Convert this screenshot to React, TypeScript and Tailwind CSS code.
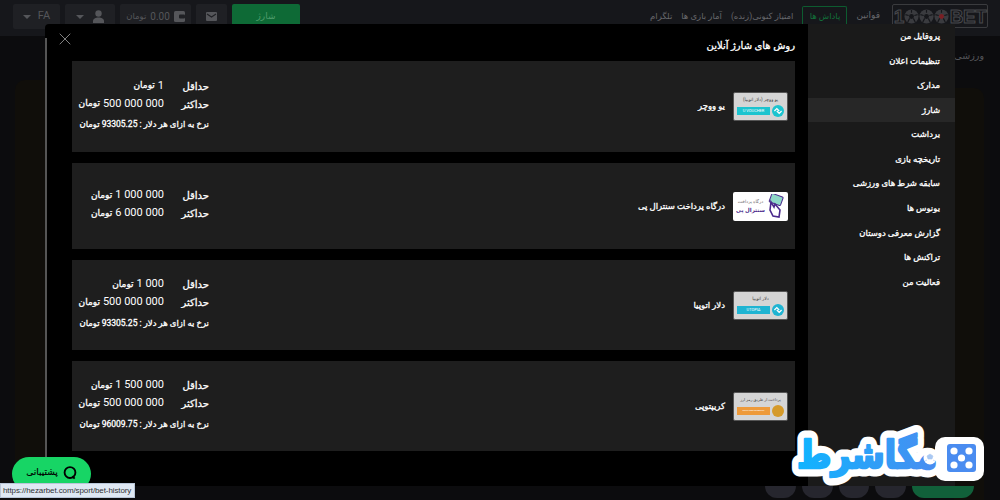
import React from 'react';
import { X } from 'lucide-react';

const FONT = "font-['Roboto','DejaVu_Sans',sans-serif]";
const HEAVY = '[-webkit-text-stroke:0.3px_white]';

const NAV_ITEMS = ['تلگرام', 'آمار بازی ها', 'امتیاز کنونی(زنده)'];
const MENU_ITEMS = [
  'پروفایل من',
  'تنظیمات اعلان',
  'مدارک',
  'شارژ',
  'برداشت',
  'تاریخچه بازی',
  'سابقه شرط های ورزشی',
  'بونوس ها',
  'گزارش معرفی دوستان',
  'تراکنش ها',
  'فعالیت من',
];

type Method = {
  name: string;
  min: string;
  max: string;
  rate?: string;
  height: string;
  thumb: React.ReactNode;
};

function Caret() {
  return <span className="h-0 w-0 border-x-[4px] border-t-[4px] border-x-transparent border-t-[#55565a]" />;
}

function SwirlBadge({ color, size }: { color: string; size: number }) {
  return (
    <svg width={size} height={size} viewBox="0 0 20 20" className="shrink-0">
      <circle cx="10" cy="10" r="10" fill={color} />
      <path d="M4 10l4-4 4 4M16 10l-4 4-4-4" fill="none" stroke="#fff" strokeWidth="2" />
    </svg>
  );
}

function GrayThumb({ title, label, bar, badge }: { title: string; label: string; bar: string; badge: string }) {
  return (
    <div className="flex h-[29px] w-[55px] shrink-0 flex-col justify-between rounded-[2px] border border-[#555] bg-[#d5d5d5] px-[3px] py-[3px]">
      <div className="whitespace-nowrap text-center text-[4.5px] leading-[8px] text-[#444]">{title}</div>
      <div dir="ltr" className="flex items-center justify-between gap-[2px]">
        <div className={`flex h-[8px] flex-1 items-center justify-center text-[4px] text-white ${bar}`}>{label}</div>
        <SwirlBadge color={badge} size={12} />
      </div>
    </div>
  );
}

function CentralThumb() {
  return (
    <div className="flex h-[29px] w-[55px] shrink-0 items-center justify-between rounded-[2px] bg-white px-[3px]">
      <svg width="20" height="24" viewBox="0 0 20 24" className="shrink-0">
        <rect x="5" y="1" width="12" height="9" rx="1" transform="rotate(20 11 6)" fill="#8fd8c8" stroke="#4b2a8c" />
        <path d="M6 8l3 5 1-3 5 6-1 7-6-1-3-6z" fill="#fff" stroke="#4b2a8c" strokeWidth="1.6" />
      </svg>
      <div className="flex-1 text-center leading-[9px]">
        <div className="whitespace-nowrap text-[4.5px] text-[#666]">درگاه پرداخت</div>
        <div className="whitespace-nowrap text-[5.5px] font-bold text-[#4b2a8c]">سنترال پی</div>
      </div>
    </div>
  );
}

function CryptoThumb() {
  return (
    <div className="flex h-[29px] w-[55px] shrink-0 flex-col justify-between rounded-[2px] border border-[#555] bg-[#d5d5d5] px-[3px] py-[3px]">
      <div className="whitespace-nowrap text-center text-[4px] leading-[8px] text-[#444]">پرداخت از طریق رمز ارز</div>
      <div dir="ltr" className="flex items-center gap-[2px]">
        <div className="flex h-[8px] flex-1 items-center justify-center whitespace-nowrap bg-[#ee9a3a] text-[2.5px] text-white">CRYPTOCURRENCY</div>
        <span className="h-[12px] w-[12px] shrink-0 rounded-full bg-[#d59a2a]" />
      </div>
    </div>
  );
}

const METHODS: Method[] = [
  {
    name: 'یو ووچر',
    min: '1 تومان',
    max: '500 000 000 تومان',
    rate: 'نرخ به ازای هر دلار : 93305.25 تومان',
    height: 'h-[91px]',
    thumb: <GrayThumb title="یو ووچر (دلار اتوپیا)" label="U VOUCHER" bar="bg-[#1cc4cf]" badge="#1cc4cf" />,
  },
  {
    name: 'درگاه پرداخت سنترال پی',
    min: '1 000 000 تومان',
    max: '6 000 000 تومان',
    height: 'h-[86px]',
    thumb: <CentralThumb />,
  },
  {
    name: 'دلار اتوپیا',
    min: '1 000 تومان',
    max: '500 000 000 تومان',
    rate: 'نرخ به ازای هر دلار : 93305.25 تومان',
    height: 'h-[90px]',
    thumb: <GrayThumb title="دلار اتوپیا" label="UTOPIA" bar="bg-[#1fb4d2]" badge="#1fb4d2" />,
  },
  {
    name: 'کریپتوپی',
    min: '1 500 000 تومان',
    max: '500 000 000 تومان',
    rate: 'نرخ به ازای هر دلار : 96009.75 تومان',
    height: 'h-[90px]',
    thumb: <CryptoThumb />,
  },
];

function Amount({ label, value }: { label: string; value: string }) {
  const number = value.replace(' تومان', '');
  return (
    <div className="flex h-[18px] items-center whitespace-nowrap text-white">
      <span className={`w-[45px] shrink-0 text-[10px] tracking-[-0.2px] ${HEAVY}`}>{label}</span>
      <span dir="ltr" className="flex items-center gap-[3px] text-[11px]">
        <span className={`text-[9px] tracking-[-0.3px] ${HEAVY}`}>تومان</span>
        <span>{number}</span>
      </span>
    </div>
  );
}

function MethodCard({ method }: { method: Method }) {
  return (
    <div dir="rtl" className={`flex items-center justify-between bg-[#1e1e1e] pr-[7px] ${method.height}`}>
      <div className="flex items-center gap-[8px]">
        {method.thumb}
        <span className={`text-[8.5px] tracking-[-0.5px] text-white ${HEAVY}`}>{method.name}</span>
      </div>
      <div className={`w-[137px] shrink-0 ${method.rate ? '-mt-[5px]' : '-mt-[3px]'}`}>
        <Amount label="حداقل" value={method.min} />
        <Amount label="حداکثر" value={method.max} />
        {method.rate && (
          <div className={`mt-[5px] whitespace-nowrap text-[8.5px] tracking-[-0.4px] text-white ${HEAVY}`}>{method.rate}</div>
        )}
      </div>
    </div>
  );
}

function Ball({ hub }: { hub: string }) {
  return (
    <svg width="15" height="15" viewBox="0 0 16 16" className="shrink-0">
      <circle cx="8" cy="8" r="7.5" fill="#3a3b3f" />
      <circle cx="8" cy="8" r="2.6" fill={hub} />
      <path d="M8 1v3M1.5 6l3.5 1M14.5 6L11 7M4 14l2-4M12 14l-2-4" stroke="#16171b" strokeWidth="1.2" />
    </svg>
  );
}

function Logo() {
  const outline = 'text-transparent [-webkit-text-stroke:1px_#47484c]';
  return (
    <div dir="ltr" className={`ml-[3px] flex h-[24px] w-[96px] items-center justify-center rounded-[2px] border border-[#3a3b3e] font-['Liberation_Sans',sans-serif] text-[19px] font-bold leading-none ${outline}`}>
      <span>1</span>
      <Ball hub="#16171b" />
      <Ball hub="#16171b" />
      <Ball hub="#7a1f24" />
      <span className="ml-[1px] tracking-[-0.5px]">BET</span>
    </div>
  );
}

function Watermark() {
  return (
    <svg width="205" height="70" viewBox="0 0 205 70" className="absolute left-[785px] top-[425px]">
      <defs>
        <linearGradient id="wm" x1="0" x2="1" y1="0" y2="0">
          <stop offset="0" stopColor="#0fb4ff" />
          <stop offset="1" stopColor="#4a8cf0" />
        </linearGradient>
      </defs>
      <rect x="150" y="12" width="49" height="44" rx="10" fill="#fff" />
      <text
        x="12"
        y="43"
        textLength="140"
        lengthAdjust="spacingAndGlyphs"
        fontFamily="DejaVu Sans, sans-serif"
        fontWeight="700"
        fontSize="38"
        fill="#fff"
        stroke="#fff"
        strokeWidth="17"
        strokeLinejoin="round"
      >
        مگاشرط
      </text>
      <text
        x="12"
        y="43"
        textLength="140"
        lengthAdjust="spacingAndGlyphs"
        fontFamily="DejaVu Sans, sans-serif"
        fontWeight="700"
        fontSize="38"
        fill="url(#wm)"
        stroke="url(#wm)"
        strokeWidth="2.5"
        strokeLinejoin="round"
      >
        مگاشرط
      </text>
      <circle cx="145" cy="33" r="6.5" fill="#fff" />
      <path d="M145 29l3 2-1 3h-4l-1-3zM140 36l2-1M150 36l-2-1" fill="#a9c8f2" stroke="#a9c8f2" strokeWidth="0.6" />
      <rect x="162" y="19" width="29" height="28" rx="3" fill="#4a8cf0" />
      <circle cx="169" cy="26" r="3.6" fill="#fff" />
      <circle cx="184" cy="26" r="3.6" fill="#fff" />
      <circle cx="176.500" cy="33" r="3.6" fill="#fff" />
      <circle cx="169" cy="40" r="3.6" fill="#fff" />
      <circle cx="184" cy="40" r="3.6" fill="#fff" />
    </svg>
  );
}

export default function App() {
  return (
    <div className={`relative h-[500px] w-[1000px] overflow-hidden bg-[#0c0c0e] ${FONT}`}>
      {/* Header */}
      <header className="flex h-[36px] items-start justify-between bg-[#16171b] pl-[13px] pr-[12px] pt-[4px]">
        <div className="flex gap-[5px] text-[10px] text-[#55565a]">
          <div className="flex h-[25px] w-[47px] items-center justify-center gap-[7px] rounded-[2px] bg-[#1f2024]">
            <Caret />
            <span className="text-[11px]">FA</span>
          </div>
          <div className="flex h-[25px] w-[50px] items-center justify-center gap-[8px] rounded-[2px] bg-[#1f2024]">
            <Caret />
            <svg width="13" height="13" viewBox="0 0 13 13" fill="#55565a">
              <circle cx="6.5" cy="3.5" r="3.2" />
              <path d="M1 13v-2c0-2 2.500-3.500 5.500-3.500S12 9 12 11v2z" />
            </svg>
          </div>
          <div className="flex h-[25px] w-[71px] items-center justify-center gap-[4px] rounded-[2px] bg-[#1f2024]">
            <span className="text-[8.5px] tracking-[-0.2px]">تومان</span>
            <span>0.00</span>
            <svg width="11" height="11" viewBox="0 0 11 11">
              <rect width="11" height="11" rx="1.5" fill="#55565a" />
              <rect x="5" y="3.500" width="6" height="4" rx="1" fill="#1f2024" />
            </svg>
          </div>
          <div className="flex h-[25px] w-[31px] items-center justify-center rounded-[2px] bg-[#1f2024]">
            <svg width="11" height="9" viewBox="0 0 11 9">
              <rect width="11" height="9" rx="1" fill="#55565a" />
              <path d="M1 2l4.500 3L10 2" fill="none" stroke="#1f2024" strokeWidth="1.1" />
            </svg>
          </div>
          <div className="flex h-[25px] w-[68px] items-center justify-center rounded-[2px] bg-[#0e6a36] text-[9px] text-[#4d9c6b]">شارژ</div>
        </div>
        <div className="flex items-center gap-[9px] text-[8.5px] tracking-[-0.6px] text-[#66676b]">
          {NAV_ITEMS.map((item) => (
            <span key={item} className="whitespace-nowrap">{item}</span>
          ))}
          <span className="flex h-[20px] w-[45px] items-center justify-center rounded-t-[2px] border border-b-0 border-[#0d5c30] text-[#12703a]">پاداش ها</span>
          <span className="text-[9px] tracking-[-0.35px]">قوانین</span>
          <Logo />
        </div>
      </header>

      {/* Page behind the modal */}
      <div className="flex justify-between pl-[15px] pr-[16px] pt-[44px]">
        <div className="h-[420px] w-[30px] rounded-tl-[10px] bg-[#100e0a]" />
        <div className="flex flex-col items-end">
          <span className="-mt-[31px] text-[9.5px] text-[#55565a]">ورزشی</span>
          <div className="mt-[25px] h-[420px] w-[30px] rounded-tr-[10px] bg-[#100e0a]" />
        </div>
      </div>

      {/* Modal */}
      <div className="absolute left-[45px] top-[24px] flex h-[462px] w-[763px] rounded-tl-[4px] bg-black">
        <div className="mt-[14px] h-[440px] w-[2px] bg-[#555]" />
        <div className="flex-1 pl-[25px] pr-[13px]">
          <div className="flex h-[37px] items-center justify-between">
            <X size={20} strokeWidth={1} className="-ml-[17px] mb-[7px] text-[#9a9a9a]" />
            <h2 dir="rtl" className={`pt-[6px] text-[10px] tracking-[-0.65px] text-white ${HEAVY}`}>روش های شارژ آنلاین</h2>
          </div>
          <div className="flex flex-col gap-[11px]">
            {METHODS.map((method) => (
              <MethodCard key={method.name} method={method} />
            ))}
          </div>
        </div>
      </div>

      {/* Profile dropdown */}
      <div dir="rtl" className={`absolute left-[808px] top-[24px] h-[462px] w-[147px] bg-[#1a1a1a] text-[8.5px] tracking-[-0.5px] text-white ${HEAVY}`}>
        {MENU_ITEMS.map((item) => (
          <div key={item} className={`flex h-[24.6px] items-center whitespace-nowrap pr-[15px] ${item === 'شارژ' ? 'bg-[#272727]' : ''}`}>
            {item}
          </div>
        ))}
      </div>

      {/* Bottom nav */}
      <div className="absolute bottom-[2px] left-[765px] flex h-[12px] items-start gap-[6px]">
        <span className="h-[12px] w-[31px] rounded-b-full bg-[#26262e]" />
        <span className="h-[12px] w-[31px] rounded-b-full bg-[#26262e]" />
        <span className="h-[12px] w-[30px] rounded-b-full bg-[#26262e]" />
        <span className="h-[12px] w-[31px] rounded-b-full bg-[#26262e]" />
        <span className="h-[12px] w-[62px] rounded-b-[12px] bg-[#11603a]" />
      </div>

      {/* Support button */}
      <div className="absolute left-[12px] top-[457px] flex h-[34px] w-[79px] items-center justify-center gap-[5px] rounded-full bg-[#17d565] pb-[3px] text-[9px] tracking-[-0.3px] text-black [-webkit-text-stroke:0.2px_black]">
        <span dir="rtl">پشتیبانی</span>
        <svg width="14" height="14" viewBox="0 0 15 15" fill="none" stroke="#000" strokeWidth="2">
          <circle cx="7.500" cy="7" r="5.800" />
          <path d="M10 11l2.500 2.500" />
        </svg>
      </div>

      {/* Status tooltip */}
      <div className="absolute bottom-[2px] left-0 h-[15px] w-[135px] whitespace-nowrap border border-[#b9c6d8] bg-[#dfe8f3] pl-[2px] font-['Liberation_Sans',sans-serif] text-[8px] leading-[13px] tracking-[-0.1px] text-[#333]">
        https://hezarbet.com/sport/bet-history
      </div>

      <Watermark />
    </div>
  );
}
